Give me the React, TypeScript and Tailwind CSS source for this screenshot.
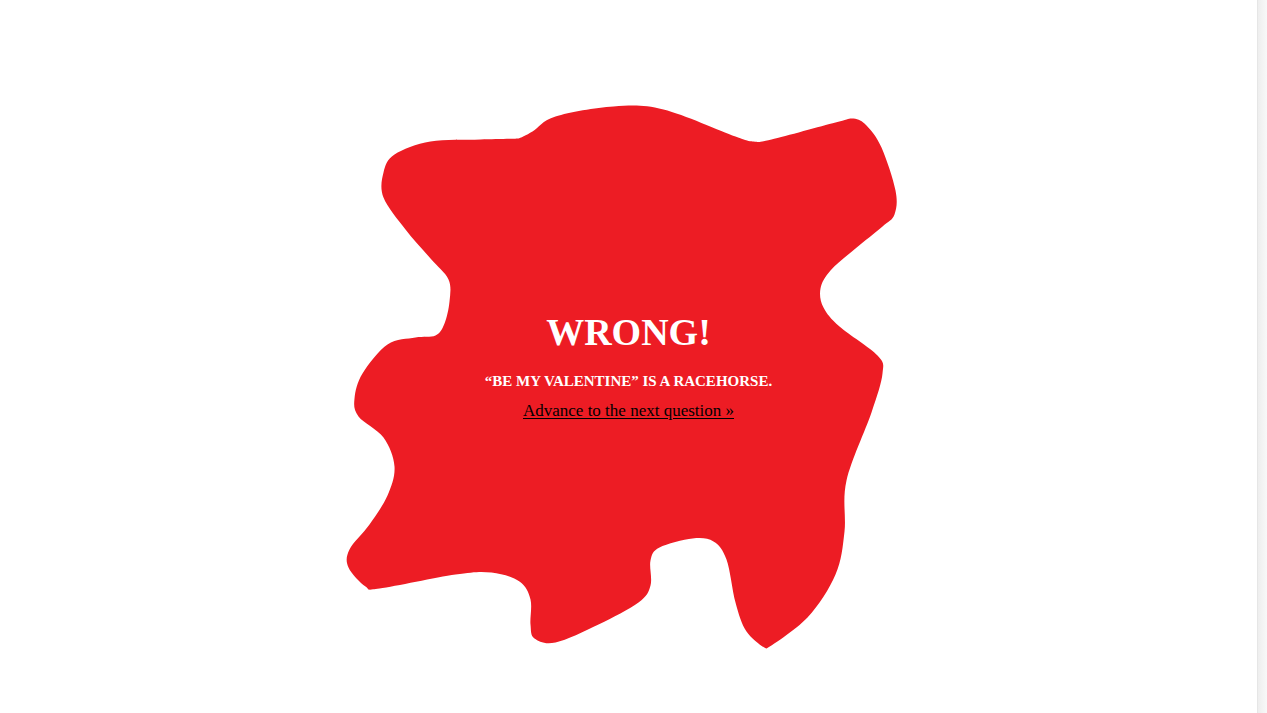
// [x, y, corner?]
const BLOB: [number, number, number?][] = [
  [518, 138, 1], [532, 131], [555, 116], [613, 106], [663, 109], [735, 136], [753, 141], [771, 139],
  [835, 122], [853, 118], [866, 125], [881, 147], [895, 190], [894, 214], [882, 226], [855, 248],
  [830, 270], [820, 288], [823, 307], [839, 326], [877, 355], [882, 373], [871, 412], [846, 480],
  [844, 531], [835, 574], [807, 617], [766, 648, 1], [746, 631], [735, 602], [726, 559], [713, 541],
  [692, 538], [659, 547], [650, 560], [650, 585], [638, 602], [598, 624], [555, 642], [534, 638],
  [530, 624], [530, 599], [519, 581], [491, 572], [455, 574], [379, 588], [365, 586], [348, 567],
  [349, 549], [369, 524], [387, 495], [394, 466], [383, 437], [358, 416], [354, 398], [362, 373],
  [387, 344], [415, 337], [435, 335], [444, 323], [449, 301], [448, 279], [430, 258], [405, 229],
  [383, 197], [383, 172], [394, 154], [430, 141], [480, 139],
];

// closed catmull-rom -> cubic beziers, corners get short handles
function smoothPath(pts: [number, number, number?][]) {
  const n = pts.length;
  let d = `M${pts[0][0]},${pts[0][1]}`;
  for (let i = 0; i < n; i++) {
    const p0 = pts[(i - 1 + n) % n];
    const p1 = pts[i];
    const p2 = pts[(i + 1) % n];
    const p3 = pts[(i + 2) % n];
    const k1 = p1[2] ? 0.15 : 1;
    const k2 = p2[2] ? 0.15 : 1;
    const c1x = p1[0] + ((p2[0] - p0[0]) / 6) * k1;
    const c1y = p1[1] + ((p2[1] - p0[1]) / 6) * k1;
    const c2x = p2[0] - ((p3[0] - p1[0]) / 6) * k2;
    const c2y = p2[1] - ((p3[1] - p1[1]) / 6) * k2;
    d += ` C${c1x.toFixed(1)},${c1y.toFixed(1)} ${c2x.toFixed(1)},${c2y.toFixed(1)} ${p2[0]},${p2[1]}`;
  }
  return d + " Z";
}

const blobPath = smoothPath(BLOB);

export default function App() {
  return (
    <div className="flex h-screen w-full bg-white font-['Liberation_Serif',serif]">
      <main className="flex flex-1 items-center justify-center">
        <div className="relative flex h-[560px] w-[560px] flex-col items-center pt-[236px]">
          <svg
            className="absolute inset-0 h-full w-full overflow-visible"
            viewBox="348.5 76.5 560 560"
            aria-hidden="true"
          >
            <path d={blobPath} fill="#ed1c24" />
          </svg>
          <h1 className="relative text-[38px] font-bold leading-none text-white">WRONG!</h1>
          <p className="relative mt-[23px] text-[15px] font-bold leading-none text-white">
            “BE MY VALENTINE” IS A RACEHORSE.
          </p>
          <a
            href="#"
            className="relative mt-[13px] text-[17px] leading-none text-black underline underline-offset-2"
          >
            Advance to the next question »
          </a>
        </div>
      </main>
      <div className="w-[10px] border-l border-[#e6e6e6] bg-gradient-to-r from-[#eeeeee] to-[#f8f8f8]" />
    </div>
  );
}
